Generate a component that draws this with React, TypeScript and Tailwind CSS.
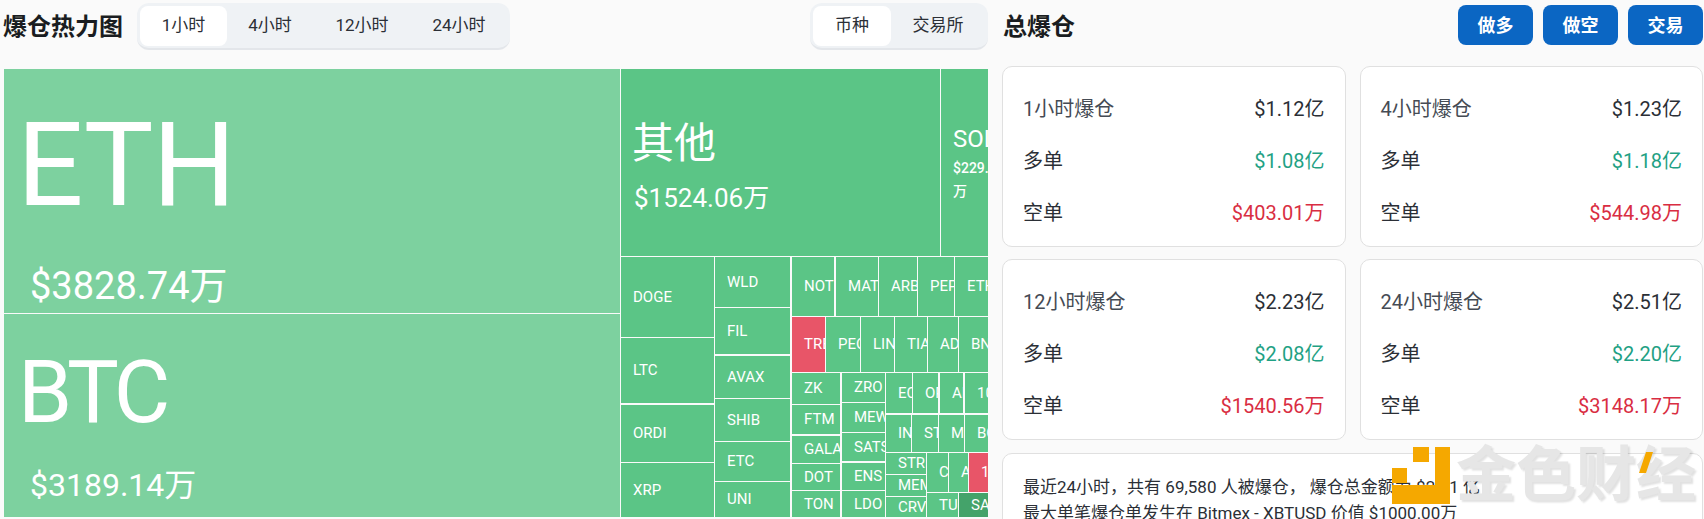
import clsx from 'clsx';

type Tile = { label: string; x0: number; y0: number; x1: number; y1: number; tone?: 'red' | 'dark' };

// page coordinates of the treemap tiles, the chart itself starts at (4, 69)
const TILES: Tile[] = [
  { label: 'DOGE', x0: 621, y0: 257, x1: 714, y1: 337 },
  { label: 'LTC', x0: 621, y0: 338, x1: 714, y1: 403 },
  { label: 'ORDI', x0: 621, y0: 405, x1: 714, y1: 462 },
  { label: 'XRP', x0: 621, y0: 463, x1: 714, y1: 517 },
  { label: 'WLD', x0: 715, y0: 257, x1: 790, y1: 307 },
  { label: 'FIL', x0: 715, y0: 308, x1: 790, y1: 354 },
  { label: 'AVAX', x0: 715, y0: 356, x1: 790, y1: 398 },
  { label: 'SHIB', x0: 715, y0: 399, x1: 790, y1: 441 },
  { label: 'ETC', x0: 715, y0: 442, x1: 790, y1: 481 },
  { label: 'UNI', x0: 715, y0: 482, x1: 790, y1: 517 },
  { label: 'NOT', x0: 792, y0: 257, x1: 834, y1: 316 },
  { label: 'MATIC', x0: 836, y0: 257, x1: 878, y1: 316 },
  { label: 'ARB', x0: 879, y0: 257, x1: 917, y1: 316 },
  { label: 'PEPE', x0: 918, y0: 257, x1: 954, y1: 316 },
  { label: 'ETHFI', x0: 955, y0: 257, x1: 988, y1: 316 },
  { label: 'TRB', x0: 792, y0: 317, x1: 825, y1: 372, tone: 'red' },
  { label: 'PEOPLE', x0: 826, y0: 317, x1: 860, y1: 372 },
  { label: 'LINK', x0: 861, y0: 317, x1: 894, y1: 372 },
  { label: 'TIA', x0: 895, y0: 317, x1: 927, y1: 372 },
  { label: 'ADA', x0: 928, y0: 317, x1: 958, y1: 372 },
  { label: 'BNB', x0: 959, y0: 317, x1: 988, y1: 372 },
  { label: 'ZK', x0: 792, y0: 373, x1: 840, y1: 404 },
  { label: 'FTM', x0: 792, y0: 405, x1: 840, y1: 434 },
  { label: 'GALA', x0: 792, y0: 436, x1: 840, y1: 463 },
  { label: 'DOT', x0: 792, y0: 464, x1: 840, y1: 490 },
  { label: 'TON', x0: 792, y0: 491, x1: 840, y1: 517 },
  { label: 'ZRO', x0: 842, y0: 373, x1: 885, y1: 402 },
  { label: 'MEW', x0: 842, y0: 403, x1: 885, y1: 432 },
  { label: 'SATS', x0: 842, y0: 433, x1: 885, y1: 461 },
  { label: 'ENS', x0: 842, y0: 463, x1: 885, y1: 490 },
  { label: 'LDO', x0: 842, y0: 491, x1: 885, y1: 517 },
  { label: 'ECOIN', x0: 886, y0: 373, x1: 912, y1: 413 },
  { label: 'OP', x0: 913, y0: 373, x1: 938, y1: 413 },
  { label: 'AI', x0: 940, y0: 373, x1: 963, y1: 413 },
  { label: '1000', x0: 965, y0: 373, x1: 988, y1: 413 },
  { label: 'INJ', x0: 886, y0: 415, x1: 911, y1: 452 },
  { label: 'STX', x0: 912, y0: 415, x1: 938, y1: 452 },
  { label: 'MKR', x0: 939, y0: 415, x1: 964, y1: 452 },
  { label: 'BCH', x0: 965, y0: 415, x1: 988, y1: 452 },
  { label: 'STRK', x0: 886, y0: 453, x1: 926, y1: 474 },
  { label: 'MEME', x0: 886, y0: 475, x1: 926, y1: 496 },
  { label: 'CRV', x0: 886, y0: 497, x1: 926, y1: 517 },
  { label: 'CFX', x0: 927, y0: 453, x1: 948, y1: 492 },
  { label: 'APT', x0: 949, y0: 453, x1: 968, y1: 492 },
  { label: '1000', x0: 969, y0: 453, x1: 988, y1: 492, tone: 'red' },
  { label: 'TURBO', x0: 927, y0: 493, x1: 958, y1: 517 },
  { label: 'SAGA', x0: 959, y0: 493, x1: 988, y1: 517, tone: 'dark' },
];

const CARDS = [
  { title: '1小时爆仓', total: '$1.12亿', long: '$1.08亿', short: '$403.01万' },
  { title: '4小时爆仓', total: '$1.23亿', long: '$1.18亿', short: '$544.98万' },
  { title: '12小时爆仓', total: '$2.23亿', long: '$2.08亿', short: '$1540.56万' },
  { title: '24小时爆仓', total: '$2.51亿', long: '$2.20亿', short: '$3148.17万' },
];

function tileBox(x0: number, y0: number, x1: number, y1: number) {
  return { left: x0 - 4, top: y0 - 69, width: x1 - x0, height: y1 - y0 };
}

function Treemap() {
  return (
    <div className="relative mt-[19px] h-[448px] w-[984px] overflow-hidden text-white">
      <div className="absolute overflow-hidden bg-[#7dd19f]" style={tileBox(4, 69, 620, 313)}>
        <div className="mt-[28px] ml-[13px] text-[117px] leading-[137px] tracking-[-1px]">ETH</div>
        <div className="mt-[29px] ml-[26px] text-[38px] leading-[46px]">$3828.74万</div>
      </div>
      <div className="absolute overflow-hidden bg-[#7dd19f]" style={tileBox(4, 314, 620, 517)}>
        <div className="mt-[27px] ml-[14px] text-[87px] leading-[102px] tracking-[-4px]">BTC</div>
        <div className="mt-[23px] ml-[26px] text-[32px] leading-[38px]">$3189.14万</div>
      </div>
      <div className="absolute overflow-hidden bg-[#5bc586]" style={tileBox(621, 69, 940, 256)}>
        <div className="mt-[45px] ml-[11px] text-[42px] leading-[60px]">其他</div>
        <div className="mt-[8px] ml-[13px] text-[26px] leading-[32px]">$1524.06万</div>
      </div>
      <div className="absolute overflow-hidden bg-[#5bc586] pl-[12px]" style={tileBox(941, 69, 988, 256)}>
        <div className="mt-[55px] text-[24px] leading-[30px]">SOL</div>
        <div className="mt-[3px] text-[14px] leading-[23px] font-medium">$229.55万</div>
      </div>
      {TILES.map((tile) => (
        <div
          key={`${tile.label}-${tile.x0}-${tile.y0}`}
          className={clsx(
            'absolute flex items-center overflow-hidden pl-[12px] text-[15px] whitespace-nowrap',
            tile.tone === 'red' && 'bg-[#e85568]',
            tile.tone === 'dark' && 'bg-[#44a36a]',
            !tile.tone && 'bg-[#5bc586]'
          )}
          style={tileBox(tile.x0, tile.y0, tile.x1, tile.y1)}
        >
          {tile.label}
        </div>
      ))}
    </div>
  );
}

function SummaryCard({ title, total, long, short }: (typeof CARDS)[number]) {
  return (
    <div className="flex h-[181px] flex-col gap-[22px] rounded-[10px] border border-[#e0e0e0] bg-white px-[20px] pt-[27px] text-[20px] leading-[30px]">
      <div className="flex justify-between text-[#2b2f36]">
        <span className="text-[#454b54]">{title}</span>
        <span>{total}</span>
      </div>
      <div className="flex justify-between text-[#2b2f36]">
        <span>多单</span>
        <span className="text-[#1fa184]">{long}</span>
      </div>
      <div className="flex justify-between text-[#2b2f36]">
        <span>空单</span>
        <span className="text-[#d92d42]">{short}</span>
      </div>
    </div>
  );
}

function Watermark() {
  return (
    <div className="absolute top-[447px] left-[1392px] flex h-[58px] w-[305px] items-center">
      <svg width="58" height="58" viewBox="0 0 58 58" className="shrink-0">
        <g fill="#f5a800">
          <rect x="21" y="0" width="16" height="15" />
          <rect x="43" y="0" width="15" height="57" />
          <rect x="0" y="21" width="15" height="15" />
          <rect x="0" y="38" width="58" height="19" />
        </g>
      </svg>
      <span className="ml-[6px] text-[60px] leading-[58px] font-bold whitespace-nowrap text-[#e6e6e6] [text-shadow:2px_2px_2px_rgba(0,0,0,0.12)]">
        金色财经
      </span>
      <svg width="14" height="21" viewBox="0 0 14 21" className="absolute top-[5px] left-[247px]">
        <polygon points="7,0 14,0 7,21 0,21" fill="#f5a800" />
      </svg>
    </div>
  );
}

export default function App() {
  return (
    <div className="relative flex h-[519px] w-[1704px] overflow-hidden bg-[#fafafa] font-[Roboto,'Noto_Sans_CJK_SC',sans-serif] text-[#2b2f36]">
      <div className="w-[988px] shrink-0 pt-[3px] pl-[4px]">
        <div className="flex h-[47px] items-center">
          <h2 className="-ml-[1px] w-[134px] shrink-0 text-[24px] leading-[30px] font-bold text-[#1a1d21]">爆仓热力图</h2>
          <div className="flex h-[47px] items-start rounded-[12px] border-b-2 border-[#e3e6ea] bg-[#eff2f5] px-[3px] pt-[3px] text-[17px]">
            <button type="button" className="h-[40px] w-[87px] rounded-[8px] bg-white">1小时</button>
            <button type="button" className="h-[40px] w-[86px]">4小时</button>
            <button type="button" className="h-[40px] w-[98px]">12小时</button>
            <button type="button" className="h-[40px] w-[96px]">24小时</button>
          </div>
          <div className="ml-auto flex h-[47px] items-start rounded-[12px] border-b-2 border-[#e3e6ea] bg-[#eff2f5] px-[3px] pt-[3px] text-[17px]">
            <button type="button" className="h-[40px] w-[78px] rounded-[8px] bg-white">币种</button>
            <button type="button" className="h-[40px] w-[94px]">交易所</button>
          </div>
        </div>
        <Treemap />
      </div>

      <div className="ml-[14px] w-[701px] shrink-0">
        <div className="flex h-[50px] items-center justify-between pt-[4px]">
          <h2 className="ml-[1px] text-[24px] leading-[30px] font-bold text-[#1a1d21]">总爆仓</h2>
          <div className="-mt-[4px] flex gap-[10px]">
            {['做多', '做空', '交易'].map((action) => (
              <button key={action} type="button" className="h-[40px] w-[75px] rounded-[8px] bg-[#0b66c3] text-[18px] font-bold text-white">
                {action}
              </button>
            ))}
          </div>
        </div>
        <div className="mt-[16px] grid grid-cols-2 gap-x-[14px] gap-y-[12px]">
          {CARDS.map((card) => (
            <SummaryCard key={card.title} {...card} />
          ))}
        </div>
        <div className="mt-[13px] h-[120px] rounded-[10px] border border-[#e0e0e0] bg-white px-[20px] pt-[20px] text-[17px] leading-[26px] text-[#2b2f36]">
          <p>最近24小时，共有 69,580 人被爆仓， 爆仓总金额为 $2.51 亿</p>
          <p>最大单笔爆仓单发生在 Bitmex - XBTUSD 价值 $1000.00万</p>
        </div>
      </div>

      <Watermark />
    </div>
  );
}
